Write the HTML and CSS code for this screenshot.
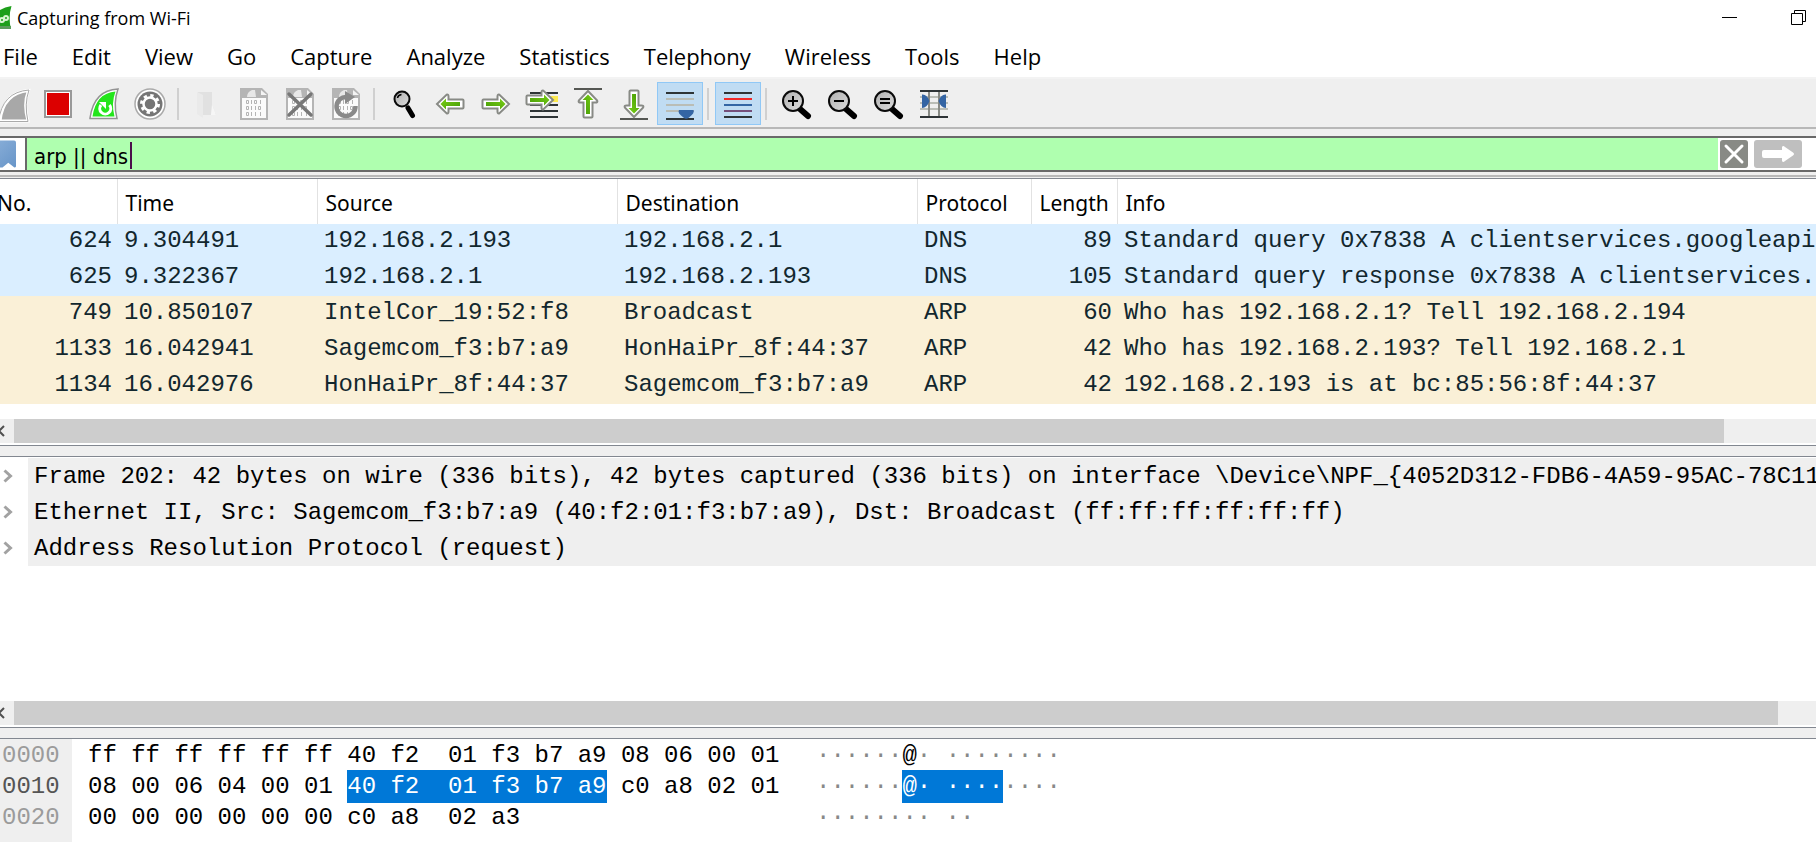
FILE: index.html
```html
<!DOCTYPE html>
<html lang="en">
<head>
<meta charset="utf-8">
<title>Capturing from Wi-Fi</title>
<link rel="stylesheet" href="styles.css">
</head>
<body>
<svg class="defs" aria-hidden="true">
  <defs>
    <linearGradient id="green" x1="0" y1="0" x2="1" y2="1"><stop offset="0" stop-color="#7ad016"/><stop offset="1" stop-color="#459a06"/></linearGradient>
    <linearGradient id="lens" x1="0" y1="0" x2="1" y2="1"><stop offset="0" stop-color="#b0b0b0"/><stop offset="1" stop-color="#dcdcdc"/></linearGradient>
    <linearGradient id="flag" x1="0" y1="0" x2="1" y2="1"><stop offset="0" stop-color="#8db1da"/><stop offset="1" stop-color="#6795c8"/></linearGradient>
    <g id="arrow">
      <path d="M3 16 12.5 6.8Q14.5 6 14.5 8.500V11.500H28.500Q29.500 11.500 29.500 12.500V19.500Q29.500 20.500 28.500 20.500H14.500V23.500Q14.500 26 12.500 25.200Z" fill="#fff" stroke="#888a85" stroke-width="2"/>
      <path d="M6.500 16 12 10.500V14H26V18H12V21.500Z" fill="url(#green)"/>
    </g>
    <g id="doc">
      <path d="M2 0H24L30 6V32H2Z" fill="#b5b5b5"/>
      <path d="M4 10H28V30H4Z" fill="#fbfbfb"/>
      <path d="M11 2 17 2 18 9H9Q9 4 14 2Z" fill="#e8e8e8"/>
      <path d="M23 2V7H29Z" fill="#f4f4f4"/>
      <g fill="none" stroke="#b4b4b4" stroke-width="1"><path d="M8.500 12.500h2v3h-2zM13.500 12v4M16.500 12.500h2v3h-2zM22.500 12v4M8.500 18.500h2v3h-2zM13.500 18v4M17.500 18v4M20.500 18.500h2v3h-2zM8.500 24.500h2v3h-2zM13.500 24v4M17.500 24v4M22.500 24v4"/></g>
    </g>
    <g id="glass">
      <path d="m20 21 8 7" stroke="#000" stroke-width="6" stroke-linecap="round"/>
      <circle cx="13" cy="13" r="10" fill="url(#lens)" stroke="#0a0a0a" stroke-width="2"/>
    </g>
  </defs>
</svg>
<div class="window">
  <header class="titlebar">
    <svg class="app-icon" viewBox="0 0 24 24"><path d="M0 23Q3 3 22.500 0Q19 11 22 23Z" fill="#1d9f1a"/><path d="M0 20 22 20V23H0Z" fill="#5b9c5b"/><g fill="none" stroke="#d9f5d2" stroke-width="2"><circle cx="13" cy="14" r="2"/><circle cx="17" cy="12" r="2"/></g></svg>
    <h1 class="title">Capturing from Wi-Fi</h1>
    <button class="caption" aria-label="Minimize"><svg viewBox="0 0 16 16"><path d="M0 7.500H15" stroke="#000"/></svg></button>
    <button class="caption caption-last" aria-label="Restore"><svg viewBox="0 0 16 16"><path d="M.5 3.500H11.500V14.500H.5ZM3.500 3.500V.5H14.500V11.500H11.500" fill="none" stroke="#000"/></svg></button>
  </header>
  <nav class="menubar">
    <button>File</button><button>Edit</button><button>View</button><button>Go</button><button>Capture</button><button>Analyze</button><button>Statistics</button><button>Telephony</button><button>Wireless</button><button>Tools</button><button>Help</button>
  </nav>
  <div class="toolbar">
    <button class="tool" aria-label="Start capture"><svg viewBox="0 0 32 32"><path d="M4 33Q7 5 32.500 2.500Q27 16 32 33Z" fill="#a8a8a8" stroke="#fff" stroke-width="3"/><path d="M2.500 33.500Q6 4 33 2Q28 16 32 33.500Z" fill="none" stroke="#aaa" stroke-width="1"/></svg></button>
    <button class="tool" aria-label="Stop capture"><svg viewBox="0 0 32 32"><path d="M3 3H29V29H3Z" fill="#fff" stroke="#999" stroke-width="2"/><path d="M5 5H27V27H5Z" fill="#dc0000"/></svg></button>
    <button class="tool" aria-label="Restart capture"><svg viewBox="0 0 32 32"><path d="M2 30Q6 2 30 1Q25 15 29 30.500H2Z" fill="#fff" stroke="#939393" stroke-width="1.500"/><path d="M4.500 28.500Q8 5 27.500 3.500Q23 15 26.500 28.500Z" fill="#23e51b"/><path d="M13 17A5.500 5.500 0 1 0 21.500 17" fill="none" stroke="#fff" stroke-width="3"/><path d="M11 14H18V21Z" fill="#fff"/></svg></button>
    <button class="tool" aria-label="Capture options"><svg viewBox="0 0 32 32"><circle cx="16" cy="16" r="15" fill="#fff" stroke="#aaa" stroke-width="1.500"/><circle cx="16" cy="16" r="12.500" fill="#757575"/><circle cx="16" cy="16" r="6.500" fill="none" stroke="#fff" stroke-width="2.500"/><circle cx="16" cy="16" r="8.500" fill="none" stroke="#fff" stroke-width="3" stroke-dasharray="3.300 3.375"/></svg></button>
    <span class="separator"></span>
    <button class="tool" aria-label="Open file"><svg viewBox="0 0 32 32"><path d="M6 4H20V16L24 27H10L6 24Z" fill="#e1e1e1"/><path d="M5 4 11 7V30L5 26Z" fill="#eaeaea"/><path d="M20 16 24 27H19Z" fill="#f6f6f6"/></svg></button>
    <button class="tool" aria-label="Save file"><svg viewBox="0 0 32 32"><use href="#doc"/></svg></button>
    <button class="tool" aria-label="Close file"><svg viewBox="0 0 32 32"><use href="#doc"/><path d="m5 6 22 21M27 6 5 27" stroke="#777" stroke-width="3.500" stroke-linecap="round"/></svg></button>
    <button class="tool" aria-label="Reload file"><svg viewBox="0 0 32 32"><use href="#doc"/><path d="M17 9A9.500 9.500 0 1 0 25.500 18" fill="none" stroke="#8a8a8a" stroke-width="4.500"/><path d="M15 3 25 9 15 16Z" fill="#8a8a8a"/></svg></button>
    <span class="separator"></span>
    <button class="tool" aria-label="Find packet"><svg viewBox="0 0 32 32"><path d="M20 20 24.500 27.500" stroke="#000" stroke-width="5" stroke-linecap="round"/><circle cx="14" cy="11" r="7.500" fill="url(#lens)" stroke="#0a0a0a" stroke-width="2"/><path d="M9.500 10Q10 7 13.500 6.500" fill="none" stroke="#000" stroke-width="1.500"/></svg></button>
    <button class="tool" aria-label="Previous packet"><svg viewBox="0 0 32 32"><use href="#arrow"/></svg></button>
    <button class="tool" aria-label="Next packet"><svg viewBox="0 0 32 32"><use href="#arrow" transform="matrix(-1 0 0 1 32 0)"/></svg></button>
    <button class="tool" aria-label="Go to packet"><svg viewBox="0 0 32 32"><path d="M4 5H32M4 23H32M4 29H32" stroke="#2e3436" stroke-width="2"/><path d="M4 17H32" stroke="#2e3436" stroke-width="2"/><path d="M20 8H32V14H20Z" fill="#fce94f"/><use href="#arrow" transform="matrix(-1 0 0 1 30 -4)"/></svg></button>
    <button class="tool" aria-label="First packet"><svg viewBox="0 0 32 32"><path d="M2 1H30" stroke="#555753" stroke-width="2"/><use href="#arrow" transform="matrix(0 1 -1 0 32 0)"/></svg></button>
    <button class="tool" aria-label="Last packet"><svg viewBox="0 0 32 32"><path d="M2 31H30" stroke="#555753" stroke-width="2"/><use href="#arrow" transform="matrix(0 -1 1 0 0 32)"/></svg></button>
    <button class="tool pressed" aria-label="Auto scroll" aria-pressed="true"><svg viewBox="0 0 32 32"><path d="M2 5H30M2 31H30" stroke="#2e3436" stroke-width="2"/><path d="M2 11H30M2 17H30M2 23H30" stroke="#babdb6" stroke-width="2"/><path d="M15 22H29.500Q31 25 25 29.500Q22 32 19.500 29.500Q13 25 15 22Z" fill="#3465a4"/></svg></button>
    <span class="separator"></span>
    <button class="tool pressed" aria-label="Colorize" aria-pressed="true"><svg viewBox="0 0 32 32"><g stroke-width="2"><path d="M2 5H30M2 29H30" stroke="#2e3436"/><path d="M2 11H30" stroke="#ef2929"/><path d="M2 17H30" stroke="#3465a4"/><path d="M2 23H30" stroke="#75507b"/></g></svg></button>
    <span class="separator"></span>
    <button class="tool" aria-label="Zoom in"><svg viewBox="0 0 32 32"><use href="#glass"/><path d="M8 13H18M13 8V18" stroke="#000" stroke-width="2"/></svg></button>
    <button class="tool" aria-label="Zoom out"><svg viewBox="0 0 32 32"><use href="#glass"/><path d="M8 13H18" stroke="#000" stroke-width="2"/></svg></button>
    <button class="tool" aria-label="Normal size"><svg viewBox="0 0 32 32"><use href="#glass"/><path d="M8 11H18M8 15H18" stroke="#000" stroke-width="2"/></svg></button>
    <button class="tool" aria-label="Resize columns"><svg viewBox="0 0 32 32"><path d="M2 9H30M2 15H30M2 21H30" stroke="#babdb6" stroke-width="2"/><path d="M11 3V30M21 3V30" stroke="#888a85" stroke-width="2"/><path d="M2 3H30M2 29H30" stroke="#2e3436" stroke-width="2"/><path d="M4 6.500Q9 6 11.500 13Q9 20 4 20ZM28 6.500Q23 6 20.500 13Q23 20 28 20Z" fill="#3465a4"/></svg></button>
  </div>
  <form class="filterbar">
    <button type="button" class="bookmark" aria-label="Filter bookmarks"><svg viewBox="0 0 28 28"><path d="M0 0H26Q28 0 28 2V27Q27 29 25 27L20 23 14 28H0Z" fill="url(#flag)"/></svg></button>
    <div class="field"><input type="text" value="arp || dns" aria-label="Display filter"><span class="caret"></span></div>
    <button type="button" class="clear" aria-label="Clear filter"><svg viewBox="0 0 28 28"><path d="m6 6 16 16M22 6 6 22" stroke="#fff" stroke-width="3" stroke-linecap="round"/></svg></button>
    <button type="button" class="apply" aria-label="Apply filter"><svg viewBox="0 0 48 28"><path d="M10 10H28V7Q29 5 31 7L39 12.500Q41 14 39 15.500L31 21Q29 23 28 21V18H10Q8 18 8 16V12Q8 10 10 10Z" fill="#fff"/></svg></button>
  </form>
  <div class="divider"></div>
  <main>
    <section class="packets">
      <table class="packet-table">
        <colgroup><col class="w-no"><col class="w-time"><col class="w-addr"><col class="w-addr"><col class="w-proto"><col class="w-len"><col></colgroup>
        <thead><tr><th>No.</th><th>Time</th><th>Source</th><th>Destination</th><th>Protocol</th><th>Length</th><th>Info</th></tr></thead>
        <tbody>
          <tr class="dns"><td class="num">624</td><td>9.304491</td><td>192.168.2.193</td><td>192.168.2.1</td><td>DNS</td><td class="num">89</td><td>Standard query 0x7838 A clientservices.googleapis</td></tr>
          <tr class="dns"><td class="num">625</td><td>9.322367</td><td>192.168.2.1</td><td>192.168.2.193</td><td>DNS</td><td class="num">105</td><td>Standard query response 0x7838 A clientservices.g</td></tr>
          <tr class="arp"><td class="num">749</td><td>10.850107</td><td>IntelCor_19:52:f8</td><td>Broadcast</td><td>ARP</td><td class="num">60</td><td>Who has 192.168.2.1? Tell 192.168.2.194</td></tr>
          <tr class="arp"><td class="num">1133</td><td>16.042941</td><td>Sagemcom_f3:b7:a9</td><td>HonHaiPr_8f:44:37</td><td>ARP</td><td class="num">42</td><td>Who has 192.168.2.193? Tell 192.168.2.1</td></tr>
          <tr class="arp"><td class="num">1134</td><td>16.042976</td><td>HonHaiPr_8f:44:37</td><td>Sagemcom_f3:b7:a9</td><td>ARP</td><td class="num">42</td><td>192.168.2.193 is at bc:85:56:8f:44:37</td></tr>
        </tbody>
      </table>
      <div class="scrollbar"><button aria-label="Scroll left"><svg viewBox="0 0 8 12"><path d="M7 1 2 6 7 11" fill="none" stroke="#505050" stroke-width="2"/></svg></button><div class="thumb thumb-list"></div></div>
    </section>
    <section class="details">
      <ul class="tree">
        <li><button aria-label="Expand Frame"><svg viewBox="0 0 10 14"><path d="M1.500 1.500 7.500 7 1.500 12.500" fill="none" stroke="#a2a2a2" stroke-width="3"/></svg></button><span>Frame 202: 42 bytes on wire (336 bits), 42 bytes captured (336 bits) on interface \Device\NPF_{4052D312-FDB6-4A59-95AC-78C11D</span></li>
        <li><button aria-label="Expand Ethernet II"><svg viewBox="0 0 10 14"><path d="M1.500 1.500 7.500 7 1.500 12.500" fill="none" stroke="#a2a2a2" stroke-width="3"/></svg></button><span>Ethernet II, Src: Sagemcom_f3:b7:a9 (40:f2:01:f3:b7:a9), Dst: Broadcast (ff:ff:ff:ff:ff:ff)</span></li>
        <li><button aria-label="Expand Address Resolution Protocol"><svg viewBox="0 0 10 14"><path d="M1.500 1.500 7.500 7 1.500 12.500" fill="none" stroke="#a2a2a2" stroke-width="3"/></svg></button><span>Address Resolution Protocol (request)</span></li>
      </ul>
      <div class="scrollbar"><button aria-label="Scroll left"><svg viewBox="0 0 8 12"><path d="M7 1 2 6 7 11" fill="none" stroke="#505050" stroke-width="2"/></svg></button><div class="thumb thumb-tree"></div></div>
    </section>
    <section class="bytes">
      <table class="hex">
        <tr><th>0000</th><td class="octets">ff ff ff ff ff ff 40 f2  01 f3 b7 a9 08 06 00 01</td><td class="ascii">······<b>@</b>· ········</td></tr>
        <tr class="current"><th>0010</th><td class="octets">08 00 06 04 00 01 <mark>40 f2  01 f3 b7 a9</mark> c0 a8 02 01</td><td class="ascii">······<mark>@· ····</mark>····</td></tr>
        <tr><th>0020</th><td class="octets">00 00 00 00 00 00 c0 a8  02 a3</td><td class="ascii">········ ··</td></tr>
      </table>
    </section>
  </main>
</div>
</body>
</html>
```
FILE: styles.css
```css
* { box-sizing: border-box; }
html, body { height: 100%; }
body {
  margin: 0;
  overflow: hidden;
  background: #fff;
  color: #000;
  font-family: "Open Sans", sans-serif;
}
button { margin: 0; padding: 0; border: 0; background: none; color: inherit; font: inherit; }
svg { display: block; flex: none; }
.defs { position: absolute; width: 0; height: 0; }

/* The window's left edge lies just past the edge of the screen. */
.window {
  display: flex;
  flex-direction: column;
  min-height: 100vh;
  margin-left: -11px;
  overflow: hidden;
}

.titlebar { display: flex; align-items: center; height: 35px; }
.app-icon { width: 24px; height: 24px; }
.title { flex: 1; margin: 0 0 0 4px; font-size: 18px; font-weight: 400; line-height: 34px; }
.caption { display: flex; align-items: center; justify-content: center; width: 69px; height: 34px; }
.caption svg { width: 16px; height: 16px; }
.caption-last { margin-right: -17px; }

.menubar {
  display: flex;
  gap: 34px;
  height: 44px;
  padding-left: 14px;
  border-bottom: 2px solid #f3f3f3;
  font-size: 22px;
  line-height: 40px;
}

.toolbar {
  display: flex;
  align-items: center;
  height: 50px;
  padding-top: 1px;
  border-bottom: 2px solid #b8b8b8;
  background: #efefef;
}
.tool {
  display: flex;
  align-items: center;
  justify-content: center;
  width: 46px;
  height: 43px;
}
.tool svg { width: 32px; height: 32px; overflow: visible; }
.pressed { border: 1px solid #90c8f6; background: #c0dcf3; }
.separator { width: 12px; height: 32px; border: solid #efefef; border-width: 0 6px 0 4px; background: #d0d0d0; }

.filterbar {
  display: flex;
  align-items: center;
  height: 43px;
  border-top: 7px solid #efefef;
  background: linear-gradient(#696969 2px, #fff 2px, #fff 34px, #696969 34px);
}
.bookmark { width: 36px; }
.bookmark svg { width: 27px; height: 28px; }
.field {
  position: relative;
  flex: 1;
  height: 32px;
  border-left: 2px solid #696969;
  background: #afffaf;
}
.field input {
  display: block;
  width: 100%;
  height: 32px;
  padding: 4px 0 0 7px;
  border: 0;
  background: none;
  color: #000;
  font-family: "DejaVu Sans Condensed", "DejaVu Sans", sans-serif;
  font-size: 22px;
  outline: 0;
}
.caret { position: absolute; left: 103px; top: 4px; width: 2px; height: 27px; background: #4b0f4b; }
.clear { width: 28px; height: 28px; margin: 0 6px 0 2px; border-radius: 3px; background: #888a85; }
.apply { width: 48px; height: 28px; margin-right: 14px; border-radius: 3px; background: #bfbfbf; }
.divider { height: 6px; border-top: 3px solid #efefef; border-bottom: 1px solid #efefef; background: #b8b8b8; }

main { display: flex; flex: 1; flex-direction: column; gap: 10px; background: #efefef; }
section { background: #fff; border-top: 1px solid #828790; }
.packets, .details { border-bottom: 1px solid #828790; }

.packet-table { width: 100%; border-collapse: collapse; table-layout: fixed; }
.w-no { width: 128px; }
.w-time { width: 200px; }
.w-addr { width: 300px; }
.w-proto { width: 114px; }
.w-len { width: 86px; }
.packet-table th {
  height: 45px;
  padding: 2px 0 0 8px;
  border-right: 1px solid #e2e2e2;
  font-family: "Noto Sans", sans-serif;
  font-size: 21px;
  font-weight: 400;
  line-height: 30px;
  text-align: left;
}
.packet-table th:last-child { border-right: 0; }
.packet-table td {
  height: 36px;
  padding: 0 5px 2px 7px;
  overflow: hidden;
  color: #12272e;
  font-family: "Liberation Mono", monospace;
  font-size: 24px;
  line-height: 34px;
  white-space: nowrap;
}
.packet-table .num { text-align: right; }
.dns { background: #daeeff; }
.arp { background: #faf0d7; }

.scrollbar {
  display: flex;
  height: 24px;
  margin: 15px 0 2px;
  background: #efefef;
}
.scrollbar button { display: flex; align-items: center; justify-content: flex-end; width: 25px; padding-right: 9px; }
.scrollbar svg { width: 8px; height: 12px; }
.thumb { flex: 1; background: #cdcdcd; }
.thumb-list { margin-right: 92px; }
.thumb-tree { margin-right: 38px; }

.details { display: flex; flex: 1; flex-direction: column; }
.tree { flex: 1; margin: 0; padding: 1px 0 0; list-style: none; }
.tree li { display: flex; height: 36px; }
.tree button { display: flex; align-items: center; width: 39px; padding-left: 14px; }
.tree svg { width: 10px; height: 14px; }
.tree span {
  flex: 1;
  min-width: 0;
  padding-left: 6px;
  overflow: hidden;
  background: #efefef;
  font-family: "Liberation Mono", monospace;
  font-size: 24px;
  line-height: 38px;
  white-space: nowrap;
}

.bytes { height: 104px; padding-top: 1px; background: linear-gradient(90deg, #efefef 83px, #fff 83px); }
.hex {
  border-collapse: collapse;
  font-family: "Liberation Mono", monospace;
  font-size: 24px;
  line-height: 31px;
  white-space: pre;
}
.hex th { width: 83px; height: 31px; padding: 0 0 0 13px; color: #9b9b9b; font-weight: 400; text-align: left; }
.hex td { height: 31px; padding: 0; }
.hex .current th { color: #555; }
.hex .octets { width: 744px; padding-left: 16px; }
.hex .ascii { color: #888; }
.hex b { color: #000; font-weight: 400; }
.hex mark { padding: 3px 0; background: #0078d7; color: #fff; }
```
